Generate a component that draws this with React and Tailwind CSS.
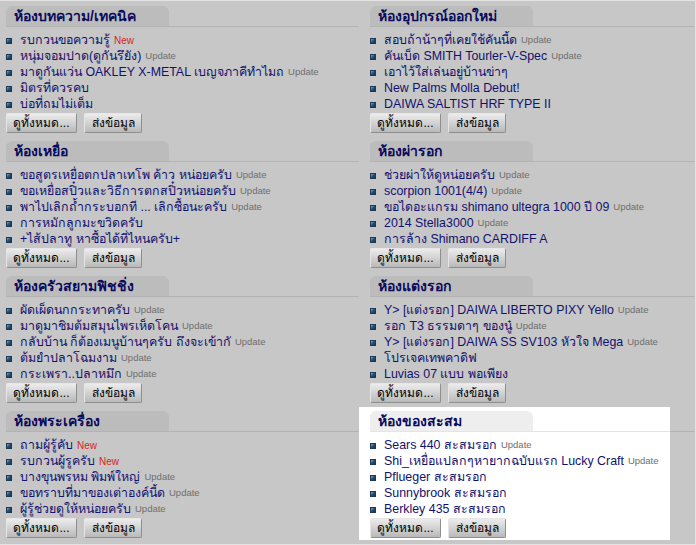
import React from 'react';

const rows = [
  [
    {
      title: 'ห้องบทความ/เทคนิค',
      items: [
        ['รบกวนขอความรู้', 'new'],
        ['หนุ่มจอมปาด(ดูกันรึยัง)', 'update'],
        ['มาดูกันแว่น OAKLEY X-METAL เบญจภาคีทำไมถ', 'update'],
        ['มิตรที่ควรคบ'],
        ['บ่อที่ถมไม่เต็ม'],
      ],
    },
    {
      title: 'ห้องอุปกรณ์ออกใหม่',
      items: [
        ['สอบถ้าน้าๆที่เคยใช้คันนี้ด', 'update'],
        ['คันเบ็ด SMITH Tourler-V-Spec', 'update'],
        ['เอาไว้ใส่เล่นอยู่บ้านข่าๆ'],
        ['New Palms Molla Debut!'],
        ['DAIWA SALTIST HRF TYPE II'],
      ],
    },
  ],
  [
    {
      title: 'ห้องเหยื่อ',
      items: [
        ['ขอสูตรเหยื่อตกปลาเทโพ ค้าว หน่อยครับ', 'update'],
        ['ขอเหยื่อสปิ๋วและวิธีการตกสปิ๋วหน่อยครับ', 'update'],
        ['พาไปเลิกถ้ำกระบอกที ... เลิกซื้อนะครับ', 'update'],
        ['การหมักลูกมะขวิดครับ'],
        ['+ไส้ปลาทู หาซื้อได้ที่ไหนครับ+'],
      ],
    },
    {
      title: 'ห้องผ่ารอก',
      items: [
        ['ช่วยผ่าให้ดูหน่อยครับ', 'update'],
        ['scorpion 1001(4/4)', 'update'],
        ['ขอไดอะแกรม shimano ultegra 1000 ปี 09', 'update'],
        ['2014 Stella3000', 'update'],
        ['การล้าง Shimano CARDIFF A'],
      ],
    },
  ],
  [
    {
      title: 'ห้องครัวสยามฟิชชิ่ง',
      items: [
        ['ผัดเผ็ดนกกระทาครับ', 'update'],
        ['มาดูมาชิมต้มสมุนไพรเห็ดโคน', 'update'],
        ['กลับบ้าน ก็ต้องเมนูบ้านๆครับ ถึงจะเข้ากั', 'update'],
        ['ต้มยำปลาโฉมงาม', 'update'],
        ['กระเพรา..ปลาหมึก', 'update'],
      ],
    },
    {
      title: 'ห้องแต่งรอก',
      items: [
        ['Y> [แต่งรอก] DAIWA LIBERTO PIXY Yello', 'update'],
        ['รอก T3 ธรรมดาๆ ของนู๋', 'update'],
        ['Y> [แต่งรอก] DAIWA SS SV103 หัวใจ Mega', 'update'],
        ['โปรเจคเทพคาดิฟ'],
        ['Luvias 07 แบบ พอเพียง'],
      ],
    },
  ],
  [
    {
      title: 'ห้องพระเครื่อง',
      items: [
        ['ถามผู้รู้คับ', 'new'],
        ['รบกวนผู้รูครับ', 'new'],
        ['บางขุนพรหม พิมพ์ใหญ่', 'update'],
        ['ขอทราบที่มาของเต่าองค์นี้ด', 'update'],
        ['ผู้รู้ช่วยดูให้หน่อยครับ', 'update'],
      ],
    },
    {
      title: 'ห้องของสะสม',
      highlight: true,
      items: [
        ['Sears 440 สะสมรอก', 'update'],
        ['Shi_เหยื่อแปลกๆหายากฉบับแรก Lucky Craft', 'update'],
        ['Pflueger สะสมรอก'],
        ['Sunnybrook สะสมรอก'],
        ['Berkley 435 สะสมรอก'],
      ],
    },
  ],
];

const Bullet = () => (
  <span className="w-[6px] h-[6px] mt-[2px] mr-[8px] shrink-0 bg-gradient-to-br from-[#8fb0cc] via-[#2d4d6f] to-[#17324f] border border-[#1c3857]" />
);

const btn =
  'h-[20px] text-[12px] leading-none text-black rounded-[2px] bg-gradient-to-b from-[#ececec] to-[#b9b9b9] border border-t-[#e6e6e6] border-l-[#e6e6e6] border-r-[#8e8e8e] border-b-[#8e8e8e]';

const Buttons = () => (
  <div className="flex gap-[7px] mt-[1px]">
    <button className={`w-[71px] ${btn}`}>ดูทั้งหมด...</button>
    <button className={`w-[58px] ${btn}`}>ส่งข้อมูล</button>
  </div>
);

const Body = ({ room }) => (
  <>
    <div className={`border-b ${room.highlight ? 'border-[#e4e4e4]' : 'border-[#b3b3b3]'}`}>
      <div
        className={`w-[163px] h-[20px] rounded-t-[6px] pl-[8px] text-[14px] leading-[20px] font-bold text-[#0a0a5c] ${
          room.highlight ? 'bg-[#eeeeee]' : 'bg-[#bcbcbc]'
        }`}
      >
        {room.title}
      </div>
    </div>
    <ul className="mt-[5px]">
      {room.items.map(([text, tag], i) => (
        <li key={i} className="h-[16px] flex items-center whitespace-nowrap">
          <Bullet />
          <span className="text-[12.4px] text-[#12126e]">{text}</span>
          {tag === 'new' && <span className="ml-[4px] text-[10px] text-[#d81f1f]">New</span>}
          {tag === 'update' && <span className="ml-[4px] text-[9.5px] text-[#6e6e6e]">Update</span>}
        </li>
      ))}
    </ul>
    <Buttons />
  </>
);

const LeftCell = ({ room }) => (
  <div className="pl-[6px] pt-[5px] pb-[3px]">
    <Body room={room} />
  </div>
);

// right column: gutters carry the header rule past the (optionally white) body
const RightCell = ({ room }) => (
  <div className="flex">
    <div className="w-[13px] h-[26px] border-b border-[#b3b3b3] shrink-0" />
    <div className={`w-[311px] shrink-0 mt-[1px] mb-[1px] pt-[4px] pb-[2px] pl-[11px] ${room.highlight ? 'bg-white' : ''}`}>
      <Body room={room} />
    </div>
    <div className="flex-1 h-[26px] border-b border-[#b3b3b3]" />
  </div>
);

export default function App() {
  return (
    <div className="w-[696px] h-[545px] bg-[#c7c7c7] border-t border-r border-b border-[#e3e3e3] overflow-hidden font-['Liberation_Sans',Tahoma,sans-serif]">
      <div className="grid grid-cols-[346px_1fr]">
        {rows.map(([left, right], i) => (
          <React.Fragment key={i}>
            <LeftCell room={left} />
            <RightCell room={right} />
          </React.Fragment>
        ))}
      </div>
    </div>
  );
}
